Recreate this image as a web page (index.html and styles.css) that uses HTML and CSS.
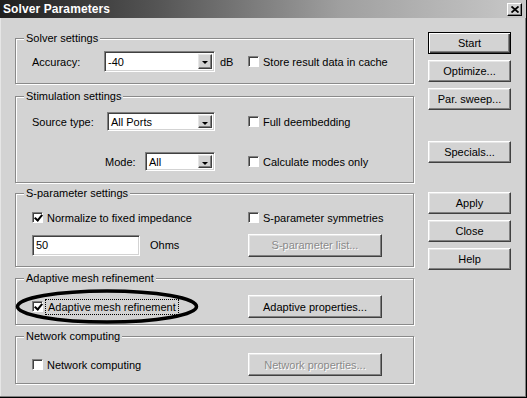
FILE: index.html
```html
<!DOCTYPE html>
<html>
<head>
    <meta http-equiv="Content-Type" content="text/html; charset=utf-8" />
    <title>Solver Parameters</title>
    <link rel="stylesheet" href="styles.css">
</head>
<body>
<div class="window">
    <div class="titlebar">
        <span class="title">Solver Parameters</span>
        <span class="closebtn">
            <svg width="8" height="7" viewBox="0 0 8 7"><path d="M0.5 0.5 L7.5 6.5 M7.5 0.5 L0.5 6.5" stroke="#000" stroke-width="1.8"/></svg>
        </span>
    </div>
    <div class="main">
        <div class="groups">
            <!-- Solver settings -->
            <div class="group g1">
                <span class="legend">Solver settings</span>
                <div class="row r1">
                    <div class="left">
                        <span class="lbl w72">Accuracy:</span>
                        <div class="combo w111"><span class="val">-40</span><span class="arrow"></span></div>
                        <span class="unit">dB</span>
                    </div>
                    <div class="right"><span class="chk"></span><span>Store result data in cache</span></div>
                </div>
            </div>

            <!-- Stimulation settings -->
            <div class="group g2">
                <span class="legend">Stimulation settings</span>
                <div class="row r19">
                    <div class="left">
                        <span class="lbl w75">Source type:</span>
                        <div class="combo w108"><span class="val">All Ports</span><span class="arrow"></span></div>
                    </div>
                    <div class="right"><span class="chk"></span><span>Full deembedding</span></div>
                </div>
                <div class="row r19 gap21">
                    <div class="left">
                        <span class="lbl mode">Mode:</span>
                        <div class="combo w70"><span class="val">All</span><span class="arrow"></span></div>
                    </div>
                    <div class="right"><span class="chk"></span><span>Calculate modes only</span></div>
                </div>
            </div>

            <!-- S-parameter settings -->
            <div class="group g3">
                <span class="legend">S-parameter settings</span>
                <div class="row r17">
                    <div class="left"><span class="chk on"></span><span>Normalize to fixed impedance</span></div>
                    <div class="right"><span class="chk"></span><span>S-parameter symmetries</span></div>
                </div>
                <div class="row r24 gap7">
                    <div class="left">
                        <div class="edit"><span class="val">50</span></div>
                        <span class="ohms">Ohms</span>
                    </div>
                    <div class="right"><span class="btn wide disabled">S-parameter list...</span></div>
                </div>
            </div>

            <!-- Adaptive mesh refinement -->
            <div class="group g4">
                <span class="legend">Adaptive mesh refinement</span>
                <div class="row r23">
                    <div class="left"><span class="chk on"></span><span class="focus">Adaptive mesh refinement</span></div>
                    <div class="right"><span class="btn wide">Adaptive properties...</span></div>
                </div>
                <svg class="ring" width="186" height="38" viewBox="0 0 186 38">
                    <ellipse cx="92" cy="18.5" rx="89.5" ry="15.5" fill="none" stroke="#000" stroke-width="3.5"/>
                </svg>
            </div>

            <!-- Network computing -->
            <div class="group g5">
                <span class="legend">Network computing</span>
                <div class="row r23">
                    <div class="left"><span class="chk"></span><span>Network computing</span></div>
                    <div class="right"><span class="btn wide disabled">Network properties...</span></div>
                </div>
            </div>
        </div>

        <div class="buttons">
            <span class="btn default">Start</span>
            <span class="btn">Optimize...</span>
            <span class="btn">Par. sweep...</span>
            <span class="btn sp">Specials...</span>
            <span class="btn ap">Apply</span>
            <span class="btn">Close</span>
            <span class="btn">Help</span>
        </div>
    </div>
</div>
</body>
</html>
```

FILE: styles.css
```css
*{ margin: 0; padding: 0; box-sizing: border-box;}
body{ background: #d3d3d3; font-family: "Liberation Sans", Arial, sans-serif; font-size: 11px; color: #000;}
.window{ width: 527px; height: 398px; background: #d3d3d3; border-right: 1px solid #000; border-bottom: 1px solid #000; box-shadow: inset -1px -1px #808080, inset 1px 0 #e6e6e6; display: flex; flex-direction: column;}

/* title bar */
.titlebar{ height: 18px; display: flex; align-items: center; justify-content: space-between; padding: 0 4px 0 3px; background: linear-gradient(to right, #1e1e1e 0%, #555 30%, #a0a0a0 65%, #c8c8c8 100%);}
.title{ color: #fff; font-weight: bold; font-size: 12px; letter-spacing: 0.1px;}
.closebtn{ width: 15px; height: 13px; background: #d3d3d3; border: 1px solid; border-color: #fff #000 #000 #fff; box-shadow: inset -1px -1px #808080; display: flex; align-items: center; justify-content: center; margin-top: 1px;}

.main{ display: flex; padding-left: 15px;}
.groups{ width: 399px;}

/* group boxes */
.group{ position: relative; border: 1px solid #8a8a8a; box-shadow: inset 1px 1px #fff, 1px 1px #fff; padding-left: 16px;}
.legend{ position: absolute; top: -7px; left: 8px; padding: 0 2px; background: #d3d3d3; line-height: 13px;}
.g1{ margin-top: 20px; height: 46px; padding-top: 12px;}
.g2{ margin-top: 12px; height: 87px; padding-top: 15px;}
.g3{ margin-top: 10px; height: 74px; padding-top: 15px;}
.g4{ margin-top: 11px; height: 47px; padding-top: 16px;}
.g5{ margin-top: 11px; height: 48px; padding-top: 16px;}

.row{ display: flex; align-items: center;}
.r1{ height: 21px;}
.r17{ height: 17px;}
.r19{ height: 19px;}
.r23{ height: 23px;}
.r24{ height: 24px;}
.gap21{ margin-top: 21px;}
.gap7{ margin-top: 7px;}
.left{ width: 217px; display: flex; align-items: center; height: 100%;}
.right{ display: flex; align-items: center; height: 100%; margin-left: -1px;}

.lbl{ display: inline-block;}
.w72{ width: 72px;}
.w75{ width: 75px;}
.mode{ margin-left: 73px; width: 40px;}
.unit{ margin-left: 5px;}
.ohms{ margin-left: 10px;}

/* combo boxes and edit */
.combo, .edit{ position: relative; height: 100%; background: #fff; border: 1px solid; border-color: #808080 #fff #fff #808080; box-shadow: inset 1px 1px #404040, inset -1px -1px #d3d3d3; display: flex; align-items: center;}
.w111{ width: 111px;}
.w108{ width: 108px;}
.w70{ width: 70px;}
.val{ padding-left: 3px;}
.arrow{ position: absolute; right: 2px; top: 2px; bottom: 2px; width: 14px; background: #d3d3d3; border: 1px solid; border-color: #e6e6e6 #404040 #404040 #e6e6e6; box-shadow: inset -1px -1px #808080;}
.arrow:after{ content: ""; position: absolute; left: 3px; top: 6px; border-left: 3px solid transparent; border-right: 3px solid transparent; border-top: 3px solid #000;}
.edit{ width: 108px; height: 21px;}

/* checkboxes */
.chk{ width: 11px; height: 11px; background: #fff; border: 1px solid; border-color: #808080 #fff #fff #808080; box-shadow: inset 1px 1px #404040; margin-right: 4px; position: relative; flex: none;}
.chk.on:after{ content: ""; position: absolute; left: 3px; top: 0px; width: 3px; height: 6px; border-right: 2px solid #000; border-bottom: 2px solid #000; transform: rotate(40deg);}
.focus{ outline: 1px dotted #000; outline-offset: 1px; padding: 0 1px;}

/* push buttons */
.btn{ display: flex; align-items: center; justify-content: center; width: 83px; height: 22px; background: #d3d3d3; border: 1px solid; border-color: #fff #404040 #404040 #fff; box-shadow: inset -1px -1px #808080, inset 1px 1px #e6e6e6;}
.btn.wide{ width: 134px; height: 23px;}
.btn.disabled{ color: #8a8a8a; text-shadow: 1px 1px #fff;}
.btn.default{ border: 1px solid #000; box-shadow: inset 1px 1px #fff, inset -1px -1px #404040, inset -2px -2px #808080;}

.buttons{ margin-left: 14px; padding-top: 14px; display: flex; flex-direction: column; gap: 6px;}
.buttons .sp{ margin-top: 25px;}
.buttons .ap{ margin-top: 23px;}

.ring{ position: absolute; left: -1px; top: 9px;}
```
